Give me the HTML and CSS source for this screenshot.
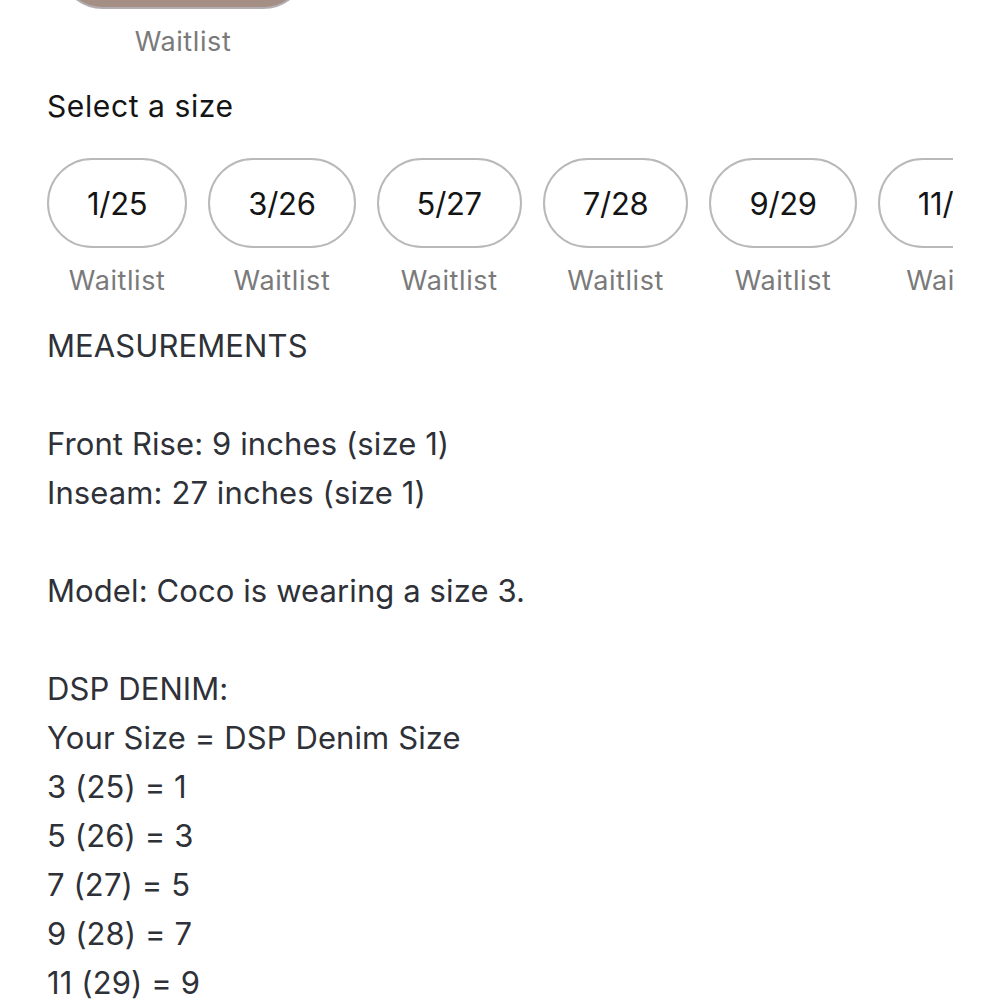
FILE: index.html
```html
<!DOCTYPE html>
<html>
<head>
<meta charset="utf-8">
<link rel="stylesheet" href="styles.css">
</head>
<body>
<div class="page">
  <div class="prev-row">
    <div class="option">
      <div class="pill pill-selected"></div>
      <div class="note">Waitlist</div>
    </div>
  </div>

  <h2 class="title">Select a size</h2>

  <div class="sizes">
    <div class="option"><div class="pill">1/25</div><div class="note">Waitlist</div></div>
    <div class="option"><div class="pill">3/26</div><div class="note">Waitlist</div></div>
    <div class="option"><div class="pill">5/27</div><div class="note">Waitlist</div></div>
    <div class="option"><div class="pill">7/28</div><div class="note">Waitlist</div></div>
    <div class="option"><div class="pill">9/29</div><div class="note">Waitlist</div></div>
    <div class="option"><div class="pill">11/30</div><div class="note">Waitlist</div></div>
  </div>

  <div class="desc">
    <p>MEASUREMENTS</p>
    <p>&nbsp;</p>
    <p>Front Rise: 9 inches (size 1)</p>
    <p>Inseam: 27 inches (size 1)</p>
    <p>&nbsp;</p>
    <p>Model: Coco is wearing a size 3.</p>
    <p>&nbsp;</p>
    <p>DSP DENIM:</p>
    <p>Your Size = DSP Denim Size</p>
    <p>3 (25) = 1</p>
    <p>5 (26) = 3</p>
    <p>7 (27) = 5</p>
    <p>9 (28) = 7</p>
    <p>11 (29) = 9</p>
  </div>
</div>
</body>
</html>
```

FILE: styles.css
```css
html, body {
  margin: 0;
  padding: 0;
  background: #ffffff;
}

body {
  font-family: Inter, "Noto Sans", sans-serif;
  overflow: hidden;
  height: 1000px;
}

.page {
  padding: 0 47px;
}

.prev-row {
  display: flex;
  padding-left: 11px;
  margin-top: -81px;
}

.option {
  display: flex;
  flex-direction: column;
  align-items: center;
  flex: 0 0 auto;
}

.pill {
  box-sizing: border-box;
  height: 90px;
  border: 2px solid #b9b9bb;
  border-radius: 45px;
  padding: 0 38px;
  display: flex;
  align-items: center;
  justify-content: center;
  font-size: 31px;
  color: #141414;
  letter-spacing: -0.3px;
}

.pill-selected {
  width: 250px;
  background: #a58e84;
  border-color: #b3adb2;
}

.note {
  margin-top: 16px;
  font-size: 27px;
  line-height: 34px;
  color: #7a7a7a;
  letter-spacing: 0.6px;
}

.title {
  margin: 27px 0 0;
  font-weight: 400;
  font-size: 30px;
  line-height: 40px;
  color: #141414;
  letter-spacing: 0.6px;
}

.sizes {
  display: flex;
  gap: 21px;
  margin-top: 32px;
  overflow: hidden;
  width: 906px;
}

.desc {
  margin-top: 23px;
  font-size: 31px;
  line-height: 49px;
  color: #2e3137;
  letter-spacing: 0.1px;
}

.desc p {
  margin: 0;
  white-space: nowrap;
}
```
